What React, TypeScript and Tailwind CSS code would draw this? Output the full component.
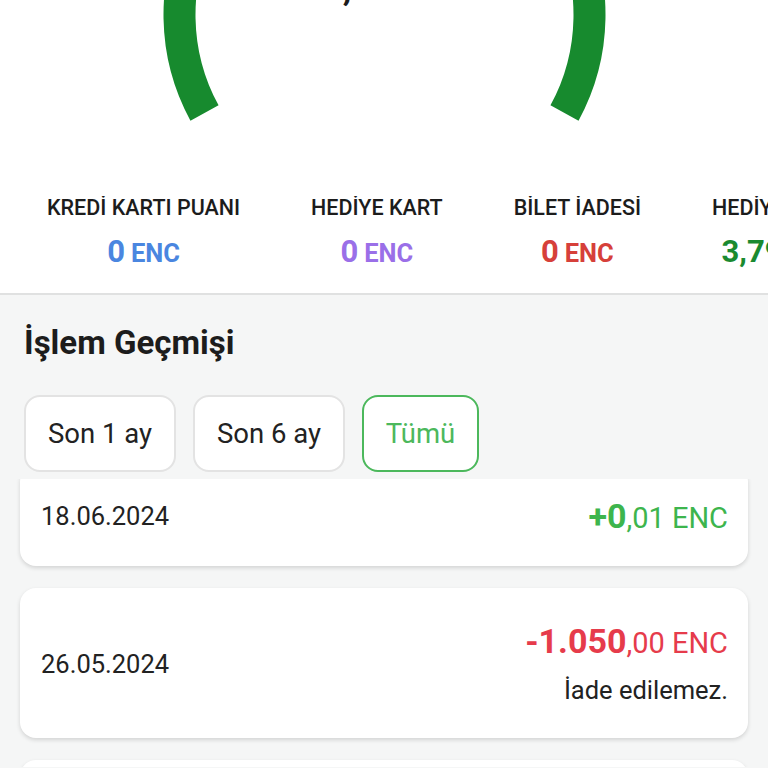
import React from "react";

const stats = [
  { label: "KREDİ KARTI PUANI", value: "0", color: "text-[#4a86e0]" },
  { label: "HEDİYE KART", value: "0", color: "text-[#9a6fe8]" },
  { label: "BİLET İADESİ", value: "0", color: "text-[#d6403a]" },
  { label: "HEDİYE PUAN", value: "3,79", color: "text-[#1a8a30]" },
];

export default function App() {
  return (
    <div className="w-[768px] h-[768px] overflow-hidden bg-[#f5f6f6] font-['Roboto',sans-serif]">
      <div className="bg-white relative">
        <svg width="768" height="196" className="block">
          <path
            d="M 204.5 113 A 205 205 0 1 1 564.5 113"
            fill="none"
            stroke="#178a2e"
            strokeWidth="32"
          />
        </svg>
        <div className="absolute left-[320px] top-[-33px] text-[40px] leading-[40px] font-medium text-[#1c1c1c] whitespace-nowrap">
          3,79 <span className="text-[#d8d8d8]">ENC</span>
        </div>
        <div className="flex gap-[71px] pl-[47px] whitespace-nowrap overflow-hidden pb-[25px]">
          {stats.map((s) => (
            <div key={s.label} className="flex flex-col items-center shrink-0">
              <div className="text-[21.5px] leading-[24px] font-medium text-[#1c1c1c]">{s.label}</div>
              <div className={`mt-[16px] h-[32px] flex items-baseline font-bold ${s.color}`}>
                <span className="text-[31px] leading-[32px]">{s.value}</span>
                <span className="text-[25.5px] leading-[32px] ml-[6px]">ENC</span>
              </div>
            </div>
          ))}
        </div>
      </div>
      <div className="border-t-2 border-[#e0e1e1]">
        <div className="pt-[28px] px-[24px] text-[33px] leading-[40px] font-bold text-[#1c1c1c]">İşlem Geçmişi</div>
        <div className="mt-[32px] px-[24px] flex gap-[17px]">
          <div className="w-[152px] h-[77px] rounded-[16px] border-2 border-[#e3e3e3] bg-white flex items-center justify-center text-[27.5px] text-[#222]">Son 1 ay</div>
          <div className="w-[152px] h-[77px] rounded-[16px] border-2 border-[#e3e3e3] bg-white flex items-center justify-center text-[27.5px] text-[#222]">Son 6 ay</div>
          <div className="w-[117px] h-[77px] rounded-[16px] border-2 border-[#4cb85c] bg-white flex items-center justify-center text-[27.5px] text-[#4cb85c]">Tümü</div>
        </div>
        <div className="mt-[7px] h-[288px] overflow-hidden">
          <div className="-mt-[13px] flex flex-col gap-[22px] px-[20px] pb-[10px]">
            <div className="h-[100px] rounded-[16px] bg-white shadow-[0_2px_4px_rgba(0,0,0,0.14)] flex items-center justify-between pl-[21px] pr-[20px]">
              <div className="text-[25.5px] text-[#222]">18.06.2024</div>
              <div className="text-[#3db54d] flex items-baseline h-[40px]">
                <span className="text-[34px] leading-[40px] font-bold">+0</span>
                <span className="text-[29px] leading-[40px]">,01 ENC</span>
              </div>
            </div>
            <div className="h-[150px] rounded-[16px] bg-white shadow-[0_2px_4px_rgba(0,0,0,0.14)] flex items-center justify-between pl-[21px] pr-[20px]">
              <div className="text-[25.5px] text-[#222] mt-[3px]">26.05.2024</div>
              <div className="flex flex-col items-end">
                <div className="text-[#e63b4b] flex items-baseline h-[40px]">
                  <span className="text-[34px] leading-[40px] font-bold">-1.050</span>
                  <span className="text-[29px] leading-[40px]">,00 ENC</span>
                </div>
                <div className="mt-[14px] text-[25.5px] leading-[30px] text-[#222]">İade edilemez.</div>
              </div>
            </div>
            <div className="h-[120px] rounded-[16px] bg-white shadow-[0_2px_4px_rgba(0,0,0,0.14)]"></div>
          </div>
        </div>
      </div>
    </div>
  );
}
